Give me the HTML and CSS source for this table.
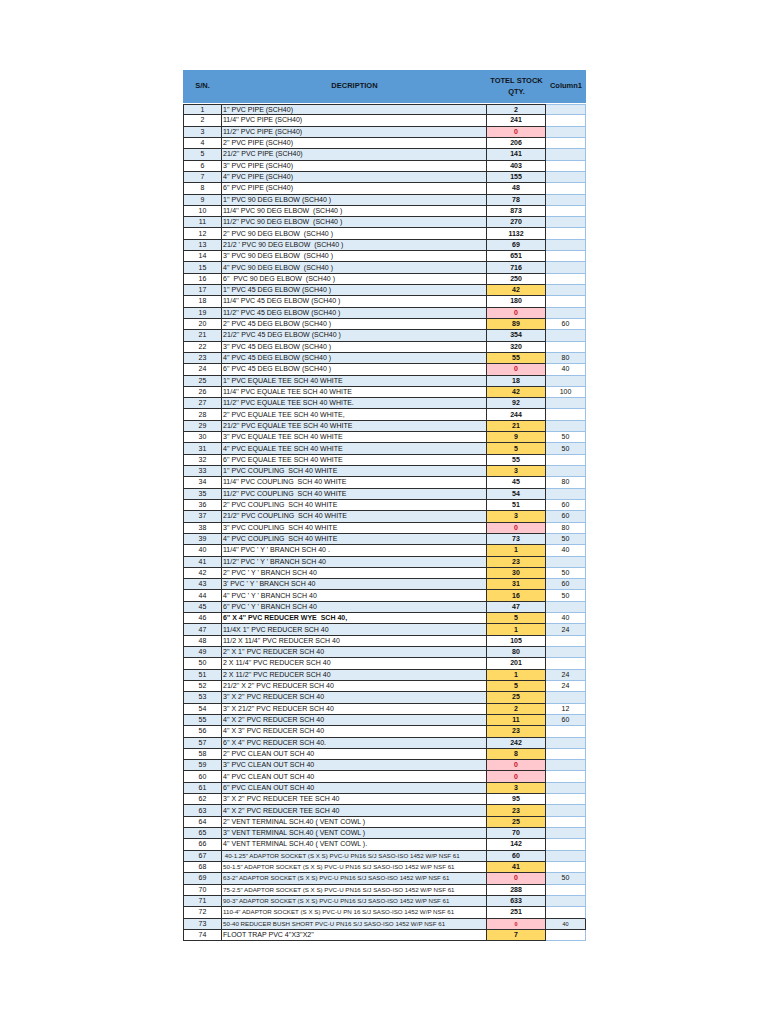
FILE: index.html
```html
<!DOCTYPE html>
<html>
<head>
<meta charset="utf-8">
<title>Stock</title>
<link rel="stylesheet" href="styles.css">
</head>
<body>
<div class="page">
  <div class="sheet">
    <div class="head">
      <div class="h">S/N.</div>
      <div class="h">DECRIPTION</div>
      <div class="h">TOTEL STOCK<br>QTY.</div>
      <div class="h">Column1</div>
    </div>
    <div class="rows">
      <div class="row first"><div class="c sn">1</div><div class="c d">1'' PVC PIPE (SCH40)</div><div class="c q">2</div><div class="c x"></div></div>
      <div class="row"><div class="c sn">2</div><div class="c d">11/4'' PVC PIPE (SCH40)</div><div class="c q">241</div><div class="c x"></div></div>
      <div class="row"><div class="c sn">3</div><div class="c d">11/2'' PVC PIPE (SCH40)</div><div class="c q z">0</div><div class="c x"></div></div>
      <div class="row"><div class="c sn">4</div><div class="c d">2'' PVC PIPE (SCH40)</div><div class="c q">206</div><div class="c x"></div></div>
      <div class="row"><div class="c sn">5</div><div class="c d">21/2'' PVC PIPE (SCH40)</div><div class="c q">141</div><div class="c x"></div></div>
      <div class="row"><div class="c sn">6</div><div class="c d">3'' PVC PIPE (SCH40)</div><div class="c q">403</div><div class="c x"></div></div>
      <div class="row"><div class="c sn">7</div><div class="c d">4'' PVC PIPE (SCH40)</div><div class="c q">155</div><div class="c x"></div></div>
      <div class="row"><div class="c sn">8</div><div class="c d">6'' PVC PIPE (SCH40)</div><div class="c q">48</div><div class="c x"></div></div>
      <div class="row"><div class="c sn">9</div><div class="c d">1'' PVC 90 DEG ELBOW (SCH40 )</div><div class="c q">78</div><div class="c x"></div></div>
      <div class="row"><div class="c sn">10</div><div class="c d">11/4'' PVC 90 DEG ELBOW  (SCH40 )</div><div class="c q">873</div><div class="c x"></div></div>
      <div class="row"><div class="c sn">11</div><div class="c d">11/2'' PVC 90 DEG ELBOW  (SCH40 )</div><div class="c q">270</div><div class="c x"></div></div>
      <div class="row"><div class="c sn">12</div><div class="c d">2'' PVC 90 DEG ELBOW  (SCH40 )</div><div class="c q">1132</div><div class="c x"></div></div>
      <div class="row"><div class="c sn">13</div><div class="c d">21/2 ' PVC 90 DEG ELBOW  (SCH40 )</div><div class="c q">69</div><div class="c x"></div></div>
      <div class="row"><div class="c sn">14</div><div class="c d">3'' PVC 90 DEG ELBOW  (SCH40 )</div><div class="c q">651</div><div class="c x"></div></div>
      <div class="row"><div class="c sn">15</div><div class="c d">4'' PVC 90 DEG ELBOW  (SCH40 )</div><div class="c q">716</div><div class="c x"></div></div>
      <div class="row"><div class="c sn">16</div><div class="c d">6''  PVC 90 DEG ELBOW  (SCH40 )</div><div class="c q">250</div><div class="c x"></div></div>
      <div class="row"><div class="c sn">17</div><div class="c d">1'' PVC 45 DEG ELBOW (SCH40 )</div><div class="c q y">42</div><div class="c x"></div></div>
      <div class="row"><div class="c sn">18</div><div class="c d">11/4'' PVC 45 DEG ELBOW (SCH40 )</div><div class="c q">180</div><div class="c x"></div></div>
      <div class="row"><div class="c sn">19</div><div class="c d">11/2'' PVC 45 DEG ELBOW (SCH40 )</div><div class="c q z">0</div><div class="c x"></div></div>
      <div class="row"><div class="c sn">20</div><div class="c d">2'' PVC 45 DEG ELBOW (SCH40 )</div><div class="c q y">89</div><div class="c x">60</div></div>
      <div class="row"><div class="c sn">21</div><div class="c d">21/2'' PVC 45 DEG ELBOW (SCH40 )</div><div class="c q">354</div><div class="c x"></div></div>
      <div class="row"><div class="c sn">22</div><div class="c d">3'' PVC 45 DEG ELBOW (SCH40 )</div><div class="c q">320</div><div class="c x"></div></div>
      <div class="row"><div class="c sn">23</div><div class="c d">4'' PVC 45 DEG ELBOW (SCH40 )</div><div class="c q y">55</div><div class="c x">80</div></div>
      <div class="row"><div class="c sn">24</div><div class="c d">6'' PVC 45 DEG ELBOW (SCH40 )</div><div class="c q z">0</div><div class="c x">40</div></div>
      <div class="row"><div class="c sn">25</div><div class="c d">1'' PVC EQUALE TEE SCH 40 WHITE</div><div class="c q">18</div><div class="c x"></div></div>
      <div class="row"><div class="c sn">26</div><div class="c d">11/4'' PVC EQUALE TEE SCH 40 WHITE</div><div class="c q y">42</div><div class="c x">100</div></div>
      <div class="row"><div class="c sn">27</div><div class="c d">11/2'' PVC EQUALE TEE SCH 40 WHITE.</div><div class="c q">92</div><div class="c x"></div></div>
      <div class="row"><div class="c sn">28</div><div class="c d">2'' PVC EQUALE TEE SCH 40 WHITE,</div><div class="c q">244</div><div class="c x"></div></div>
      <div class="row"><div class="c sn">29</div><div class="c d">21/2'' PVC EQUALE TEE SCH 40 WHITE</div><div class="c q y">21</div><div class="c x"></div></div>
      <div class="row"><div class="c sn">30</div><div class="c d">3'' PVC EQUALE TEE SCH 40 WHITE</div><div class="c q y">9</div><div class="c x">50</div></div>
      <div class="row"><div class="c sn">31</div><div class="c d">4'' PVC EQUALE TEE SCH 40 WHITE</div><div class="c q y">5</div><div class="c x">50</div></div>
      <div class="row"><div class="c sn">32</div><div class="c d">6'' PVC EQUALE TEE SCH 40 WHITE</div><div class="c q">55</div><div class="c x"></div></div>
      <div class="row"><div class="c sn">33</div><div class="c d">1'' PVC COUPLING  SCH 40 WHITE</div><div class="c q y">3</div><div class="c x"></div></div>
      <div class="row"><div class="c sn">34</div><div class="c d">11/4'' PVC COUPLING  SCH 40 WHITE</div><div class="c q">45</div><div class="c x">80</div></div>
      <div class="row"><div class="c sn">35</div><div class="c d">11/2'' PVC COUPLING  SCH 40 WHITE</div><div class="c q">54</div><div class="c x"></div></div>
      <div class="row"><div class="c sn">36</div><div class="c d">2'' PVC COUPLING  SCH 40 WHITE</div><div class="c q">51</div><div class="c x">60</div></div>
      <div class="row"><div class="c sn">37</div><div class="c d">21/2'' PVC COUPLING  SCH 40 WHITE</div><div class="c q y">3</div><div class="c x">60</div></div>
      <div class="row"><div class="c sn">38</div><div class="c d">3'' PVC COUPLING  SCH 40 WHITE</div><div class="c q z">0</div><div class="c x">80</div></div>
      <div class="row"><div class="c sn">39</div><div class="c d">4'' PVC COUPLING  SCH 40 WHITE</div><div class="c q">73</div><div class="c x">50</div></div>
      <div class="row"><div class="c sn">40</div><div class="c d">11/4'' PVC ' Y ' BRANCH SCH 40 .</div><div class="c q y">1</div><div class="c x">40</div></div>
      <div class="row"><div class="c sn">41</div><div class="c d">11/2'' PVC ' Y ' BRANCH SCH 40</div><div class="c q y">23</div><div class="c x"></div></div>
      <div class="row"><div class="c sn">42</div><div class="c d">2'' PVC ' Y ' BRANCH SCH 40</div><div class="c q y">30</div><div class="c x">50</div></div>
      <div class="row"><div class="c sn">43</div><div class="c d">3' PVC ' Y ' BRANCH SCH 40</div><div class="c q y">31</div><div class="c x">60</div></div>
      <div class="row"><div class="c sn">44</div><div class="c d">4'' PVC ' Y ' BRANCH SCH 40</div><div class="c q y">16</div><div class="c x">50</div></div>
      <div class="row"><div class="c sn">45</div><div class="c d">6'' PVC ' Y ' BRANCH SCH 40</div><div class="c q">47</div><div class="c x"></div></div>
      <div class="row"><div class="c sn">46</div><div class="c d b">6'' X 4'' PVC REDUCER WYE  SCH 40,</div><div class="c q y">5</div><div class="c x">40</div></div>
      <div class="row"><div class="c sn">47</div><div class="c d">11/4X 1'' PVC REDUCER SCH 40</div><div class="c q y">1</div><div class="c x">24</div></div>
      <div class="row"><div class="c sn">48</div><div class="c d">11/2 X 11/4'' PVC REDUCER SCH 40</div><div class="c q">105</div><div class="c x"></div></div>
      <div class="row"><div class="c sn">49</div><div class="c d">2'' X 1'' PVC REDUCER SCH 40</div><div class="c q">80</div><div class="c x"></div></div>
      <div class="row"><div class="c sn">50</div><div class="c d">2 X 11/4'' PVC REDUCER SCH 40</div><div class="c q">201</div><div class="c x"></div></div>
      <div class="row"><div class="c sn">51</div><div class="c d">2 X 11/2'' PVC REDUCER SCH 40</div><div class="c q y">1</div><div class="c x">24</div></div>
      <div class="row"><div class="c sn">52</div><div class="c d">21/2'' X 2'' PVC REDUCER SCH 40</div><div class="c q y">5</div><div class="c x">24</div></div>
      <div class="row"><div class="c sn">53</div><div class="c d">3'' X 2'' PVC REDUCER SCH 40</div><div class="c q y">25</div><div class="c x"></div></div>
      <div class="row"><div class="c sn">54</div><div class="c d">3'' X 21/2'' PVC REDUCER SCH 40</div><div class="c q y">2</div><div class="c x">12</div></div>
      <div class="row"><div class="c sn">55</div><div class="c d">4'' X 2'' PVC REDUCER SCH 40</div><div class="c q y">11</div><div class="c x">60</div></div>
      <div class="row"><div class="c sn">56</div><div class="c d">4'' X 3'' PVC REDUCER SCH 40</div><div class="c q y">23</div><div class="c x"></div></div>
      <div class="row"><div class="c sn">57</div><div class="c d">6'' X 4'' PVC REDUCER SCH 40.</div><div class="c q">242</div><div class="c x"></div></div>
      <div class="row"><div class="c sn">58</div><div class="c d">2'' PVC CLEAN OUT SCH 40</div><div class="c q y">8</div><div class="c x"></div></div>
      <div class="row"><div class="c sn">59</div><div class="c d">3'' PVC CLEAN OUT SCH 40</div><div class="c q z">0</div><div class="c x"></div></div>
      <div class="row"><div class="c sn">60</div><div class="c d">4'' PVC CLEAN OUT SCH 40</div><div class="c q z">0</div><div class="c x"></div></div>
      <div class="row"><div class="c sn">61</div><div class="c d">6'' PVC CLEAN OUT SCH 40</div><div class="c q y">3</div><div class="c x"></div></div>
      <div class="row"><div class="c sn">62</div><div class="c d">3'' X 2'' PVC REDUCER TEE SCH 40</div><div class="c q">95</div><div class="c x"></div></div>
      <div class="row"><div class="c sn">63</div><div class="c d">4'' X 2'' PVC REDUCER TEE SCH 40</div><div class="c q y">23</div><div class="c x"></div></div>
      <div class="row"><div class="c sn">64</div><div class="c d">2'' VENT TERMINAL SCH.40 ( VENT COWL )</div><div class="c q y">25</div><div class="c x"></div></div>
      <div class="row"><div class="c sn">65</div><div class="c d">3'' VENT TERMINAL SCH.40 ( VENT COWL )</div><div class="c q">70</div><div class="c x"></div></div>
      <div class="row"><div class="c sn">66</div><div class="c d">4'' VENT TERMINAL SCH.40 ( VENT COWL ).</div><div class="c q">142</div><div class="c x"></div></div>
      <div class="row"><div class="c sn">67</div><div class="c d n"> 40-1.25" ADAPTOR SOCKET (S X S) PVC-U PN16 S/J SASO-ISO 1452 W/P NSF 61</div><div class="c q">60</div><div class="c x"></div></div>
      <div class="row"><div class="c sn">68</div><div class="c d n">50-1.5" ADAPTOR SOCKET (S X S) PVC-U PN16 S/J SASO-ISO 1452 W/P NSF 61</div><div class="c q y">41</div><div class="c x"></div></div>
      <div class="row"><div class="c sn">69</div><div class="c d n">63-2" ADAPTOR SOCKET (S X S) PVC-U PN16 S/J SASO-ISO 1452 W/P NSF 61</div><div class="c q z">0</div><div class="c x">50</div></div>
      <div class="row"><div class="c sn">70</div><div class="c d n">75-2.5" ADAPTOR SOCKET (S X S) PVC-U PN16 S/J SASO-ISO 1452 W/P NSF 61</div><div class="c q">288</div><div class="c x"></div></div>
      <div class="row"><div class="c sn">71</div><div class="c d n">90-3" ADAPTOR SOCKET (S X S) PVC-U PN16 S/J SASO-ISO 1452 W/P NSF 61</div><div class="c q">633</div><div class="c x"></div></div>
      <div class="row"><div class="c sn">72</div><div class="c d n">110-4" ADAPTOR SOCKET (S X S) PVC-U PN 16 S/J SASO-ISO 1452 W/P NSF 61</div><div class="c q">251</div><div class="c x dark-below"></div></div>
      <div class="row"><div class="c sn">73</div><div class="c d n">50-40 REDUCER BUSH SHORT PVC-U PN16 S/J SASO-ISO 1452 W/P NSF 61</div><div class="c q z sm">0</div><div class="c x boxed sm">40</div></div>
      <div class="row"><div class="c sn">74</div><div class="c d">FLOOT TRAP PVC 4''X3''X2''</div><div class="c q y">7</div><div class="c x"></div></div>
    </div>
  </div>
</div>
</body>
</html>
```
FILE: styles.css
```css
html, body {
  margin: 0;
  padding: 0;
  background: #ffffff;
}

.page {
  padding: 70px 0 0 183px;
  font-family: "Liberation Sans", Arial, sans-serif;
  color: #111111;
}

.sheet {
  width: 403px;
  display: flex;
  flex-direction: column;
}

.head {
  display: grid;
  grid-template-columns: 39px 265px 59px 40px;
  height: 33px;
  background: #5b9bd5;
  margin-bottom: 1px;
}

.h {
  display: flex;
  align-items: center;
  justify-content: center;
  text-align: center;
  font-weight: bold;
  font-size: 7.5px;
  line-height: 10.3px;
  color: #10151c;
}

.rows {
  display: flex;
  flex-direction: column;
}

.row {
  display: grid;
  grid-template-columns: 39px 265px 59px 40px;
  height: 11.32px;
}

.c {
  box-sizing: border-box;
  border-right: 1px solid #2e2e2e;
  border-bottom: 1px solid #2e2e2e;
  display: flex;
  align-items: center;
  justify-content: center;
  font-size: 7px;
  line-height: 8px;
  white-space: pre;
  overflow: hidden;
  background: #ffffff;
}

.sn {
  border-left: 1px solid #2e2e2e;
}

.d {
  justify-content: flex-start;
  padding-left: 1px;
}

.d.b {
  font-weight: bold;
}

.d.n {
  font-size: 6.2px;
  color: #262626;
}

.q {
  font-weight: bold;
}

.x {
  border-right-color: #9bc2e6;
  border-bottom-color: #9bc2e6;
}

.row.first .c {
  border-top: 1px solid #2e2e2e;
}

.row.first .x {
  border-top-color: #9bc2e6;
}

.rows > .row:nth-child(odd) > .c {
  background: #ddebf7;
}

.rows > .row > .c.y {
  background: #ffd966;
}

.rows > .row > .c.z {
  background: #ffc7ce;
  color: #c8101c;
}

.c.sm {
  font-size: 5.5px;
}

.x.sm {
  font-weight: normal;
}

.x.dark-below {
  border-bottom-color: #2e2e2e;
}

.x.boxed {
  border-right-color: #2e2e2e;
  border-bottom-color: #2e2e2e;
}
```
